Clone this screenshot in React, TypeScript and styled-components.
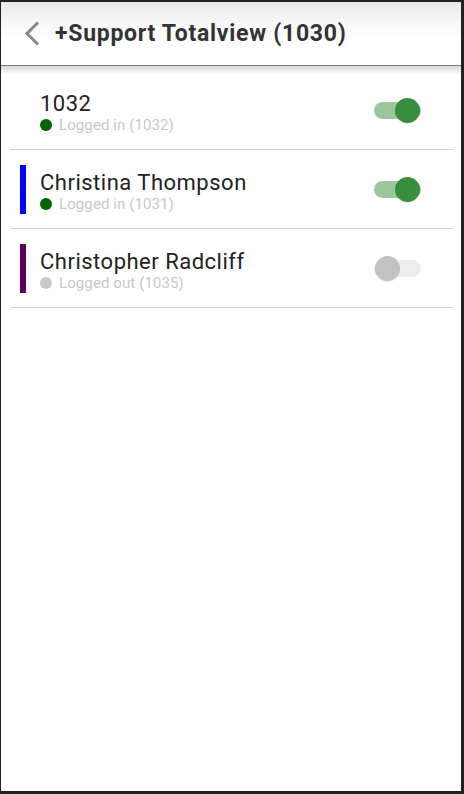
import React from "react";
import styled, { createGlobalStyle } from "styled-components";

const Global = createGlobalStyle`
  html, body { margin: 0; padding: 0; background: #222; }
  body { font-family: Roboto, "Noto Sans", Arial, sans-serif; }
  * { box-sizing: border-box; }
`;

const Frame = styled.div`
  width: 464px;
  height: 794px;
  background: #222;
  padding: 2px 3px 3px 1px;
`;

const Screen = styled.div`
  width: 100%;
  height: 100%;
  background: #fff;
  display: flex;
  flex-direction: column;
  overflow: hidden;
`;

const Header = styled.header`
  height: 64px;
  flex: none;
  display: flex;
  align-items: center;
  padding-left: 22px;
  gap: 14px;
  background: linear-gradient(#e9e9e9 0%, #f8f8f8 35%, #fff 60%);
  border-bottom: 1px solid #777;
  position: relative;
  &::after {
    content: "";
    position: absolute;
    left: 0;
    right: 0;
    top: 64px;
    height: 9px;
    background: linear-gradient(#d8d8d8, rgba(255, 255, 255, 0));
  }
`;

const BackButton = styled.button`
  border: 0;
  background: none;
  padding: 0;
  width: 18px;
  height: 26px;
  display: flex;
  align-items: center;
  justify-content: center;
  cursor: pointer;
`;

const Title = styled.h1`
  margin: 0;
  font-size: 23px;
  font-weight: 700;
  color: #333;
  letter-spacing: 0.72px;
`;

const List = styled.ul`
  list-style: none;
  margin: 5px 8px 0 9px;
  padding: 0;
`;

const Row = styled.li`
  height: 79px;
  display: flex;
  align-items: center;
  padding: 0 32px 0 10px;
  border-bottom: 1px solid #cfcfcf;
`;

const ColorBar = styled.div<{ $color?: string }>`
  width: 6px;
  height: 49px;
  flex: none;
  background: ${(p) => p.$color || "transparent"};
  margin-right: 14px;
`;

const Info = styled.div`
  flex: 1;
  display: flex;
  flex-direction: column;
  margin-top: 5px;
`;

const Name = styled.div`
  font-size: 22px;
  line-height: 24px;
  color: #222;
  letter-spacing: 0.5px;
`;

const Status = styled.div`
  display: flex;
  align-items: center;
  gap: 7px;
  font-size: 15px;
  line-height: 18px;
  color: #c8c8c8;
  letter-spacing: 0.1px;
`;

const Dot = styled.span<{ $on: boolean }>`
  width: 12px;
  height: 12px;
  border-radius: 50%;
  background: ${(p) => (p.$on ? "#006400" : "#c8c8c8")};
  flex: none;
`;

const Toggle = styled.div<{ $on: boolean }>`
  position: relative;
  width: 47px;
  height: 17px;
  border-radius: 9px;
  background: ${(p) => (p.$on ? "#9cc69d" : "#ececec")};
  flex: none;
`;

const Thumb = styled.span<{ $on: boolean }>`
  position: absolute;
  top: -4px;
  ${(p) => (p.$on ? "right: 1px;" : "left: 1px;")}
  width: 25px;
  height: 25px;
  border-radius: 50%;
  background: ${(p) => (p.$on ? "#388e3c" : "#c2c2c2")};
  box-shadow: 0 1px 1px rgba(0, 0, 0, 0.08);
`;

const users = [
  { name: "1032", on: true, status: "Logged in (1032)", color: undefined },
  { name: "Christina Thompson", on: true, status: "Logged in (1031)", color: "#0000ff" },
  { name: "Christopher Radcliff", on: false, status: "Logged out (1035)", color: "#5e005e" },
];

export default function App() {
  return (
    <Frame>
      <Global />
      <Screen>
        <Header>
          <BackButton aria-label="Back">
            <svg width="16" height="25" viewBox="0 0 16 25">
              <polyline points="14,1.5 3,12.5 14,23.5" fill="none" stroke="#888" strokeWidth="3" />
            </svg>
          </BackButton>
          <Title>+Support Totalview (1030)</Title>
        </Header>
        <List>
          {users.map((u) => (
            <Row key={u.name}>
              <ColorBar $color={u.color} />
              <Info>
                <Name>{u.name}</Name>
                <Status>
                  <Dot $on={u.on} />
                  {u.status}
                </Status>
              </Info>
              <Toggle $on={u.on}>
                <Thumb $on={u.on} />
              </Toggle>
            </Row>
          ))}
        </List>
      </Screen>
    </Frame>
  );
}
